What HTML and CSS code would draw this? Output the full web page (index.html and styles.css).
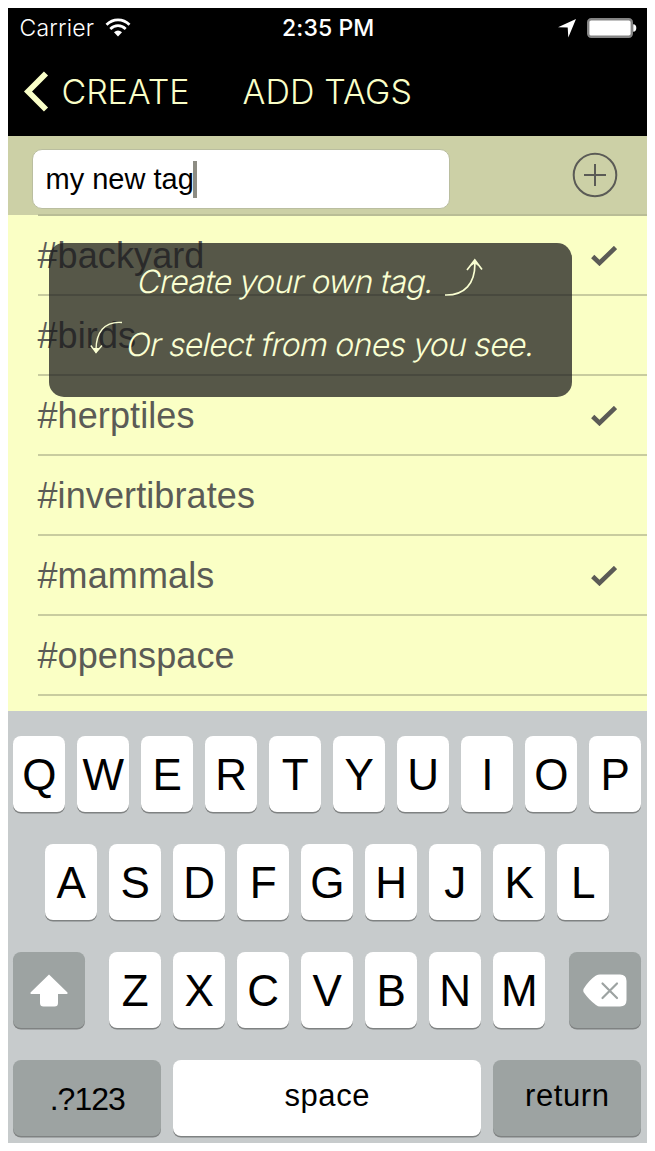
FILE: index.html
```html
<!DOCTYPE html>
<html lang="en">
<head>
<meta charset="utf-8">
<title>Add Tags</title>
<link rel="stylesheet" href="styles.css">
</head>
<body>
<main class="phone">
  <header class="top">
    <div class="status">
      <div class="carrier"><span class="carrier-name">Carrier</span>
        <svg class="wifi" width="26" height="20" viewBox="0 0 26 20" fill="none" stroke="#fff"><path d="M1.5 6.8C8 .2 18 .2 24.500 6.800" stroke-width="2.700"/><path d="M5.300 11C9.800 6.500 16.200 6.500 20.700 11" stroke-width="2.700"/><path d="M13 18.500L9 14.300Q13 10.800 17 14.300Z" fill="#fff" stroke="none"/></svg>
      </div>
      <div class="time">2:35 PM</div>
      <div class="indicators">
        <svg width="18" height="19" viewBox="0 0 18 19"><path d="M18 0L10.300 18.500L9.700 8.500L0 8.200Z" fill="#fff"/></svg>
        <svg width="50" height="20" viewBox="0 0 50 20"><rect x="1.200" y="1.200" width="43.600" height="17.600" rx="3" fill="#fff" stroke="#858585" stroke-width="2.400"/><path d="M46.200 6.200Q49.300 6.500 49.300 10Q49.300 13.500 46.200 13.800Z" fill="#fff"/></svg>
      </div>
    </div>
    <nav class="nav">
      <svg class="back" width="25" height="41" viewBox="0 0 25 41" fill="none" stroke="#faffc8" stroke-width="5.800"><path d="M22 2.500L4 20.500L22 38.500"/></svg>
      <span class="back-label">CREATE</span>
      <h1 class="title">ADD TAGS</h1>
    </nav>
  </header>
  <section class="entry">
    <div class="field"><span class="value">my new tag</span><i class="caret"></i></div>
    <svg class="add" width="46" height="46" viewBox="0 0 46 46" fill="none" stroke="#5b5b56" stroke-width="2"><circle cx="23" cy="23" r="21.300"/><path d="M12 23H34M23 12V34"/></svg>
  </section>
  <section class="list">
    <div class="edge"></div>
    <div class="row"><span>#backyard</span><svg class="check" width="26" height="20" viewBox="0 0 26 20"><path d="M1.700 10.500L8.500 17L24.500 1.500"/></svg></div>
    <div class="row"><span>#birds</span></div>
    <div class="row"><span>#herptiles</span><svg class="check" width="26" height="20" viewBox="0 0 26 20"><path d="M1.700 10.500L8.500 17L24.500 1.500"/></svg></div>
    <div class="row"><span>#invertibrates</span></div>
    <div class="row"><span>#mammals</span><svg class="check" width="26" height="20" viewBox="0 0 26 20"><path d="M1.700 10.500L8.500 17L24.500 1.500"/></svg></div>
    <div class="row"><span>#openspace</span></div>
    <aside class="hint">
      <p class="hint-create"><span>Create your own tag.</span>
        <svg width="40" height="40" viewBox="0 0 40 40" fill="none" stroke="#faffd2" stroke-width="1.700"><path d="M1 39C20 39.500 32 28 30.800 5M23 14L30.800 4L38 13.500"/><path d="M27 10L30.800 3.500L34.500 10L30.800 7.500Z" fill="#faffd2" stroke="none"/></svg></p>
      <p class="hint-select"><svg width="33" height="40" viewBox="0 0 33 40" fill="none" stroke="#faffd2" stroke-width="1.400"><path d="M32 6.500C14 5 6 17 6 34M.800 29.500L6 36.500L12 29.500"/><path d="M3 32L6 37.500L9.500 32Z" fill="#faffd2" stroke="none"/></svg>
        <span>Or select from ones you see.</span></p>
    </aside>
  </section>
  <section class="keyboard">
    <div class="keys"><b>Q</b><b>W</b><b>E</b><b>R</b><b>T</b><b>Y</b><b>U</b><b>I</b><b>O</b><b>P</b></div>
    <div class="keys"><b>A</b><b>S</b><b>D</b><b>F</b><b>G</b><b>H</b><b>J</b><b>K</b><b>L</b></div>
    <div class="keys">
      <b class="dark shift"><svg width="38" height="33" viewBox="0 0 38 33"><path d="M19 .500L37.500 18.500Q38 20 36.500 20H28V29Q28 32.500 24.500 32.500H13.500Q10 32.500 10 29V20H1.500Q0 20 .500 18.500Z" fill="#fff"/></svg></b>
      <b>Z</b><b>X</b><b>C</b><b>V</b><b>B</b><b>N</b><b>M</b>
      <b class="dark delete"><svg width="44" height="33" viewBox="0 0 44 33"><path d="M.500 15Q6 6 13 1.500Q15 .500 17 .500H37Q43.500 .500 43.500 7V26Q43.500 32.500 37 32.500H17Q15 32.500 13 31Q6 26 .500 18Q0 16.500 .500 15Z" fill="#fff"/><path d="M19.500 9.500L34 24M34 9.500L19.500 24" stroke="#9da3a2" stroke-width="2.200" stroke-linecap="round"/></svg></b>
    </div>
    <div class="keys wide"><b class="dark mode">.?123</b><b class="space">space</b><b class="dark return">return</b></div>
  </section>
</main>
</body>
</html>
```
FILE: styles.css
```css
* { box-sizing: border-box; }
body { margin: 0; padding: 8px 7.5px; background: #fff; font-family: "Liberation Sans", Arial, sans-serif; }
.phone { width: 639.5px; height: 1135px; display: flex; flex-direction: column; }
.top { height: 127.5px; background: #000; display: flex; flex-direction: column; }
.status { height: 40px; display: grid; grid-template-columns: 1fr auto 1fr; align-items: center; color: #fff; padding: 0 10px 0 12px; }
.carrier { display: flex; align-items: center; gap: 11px; }
.carrier-name { font: 300 23px/40px Inter, sans-serif; letter-spacing: .2px; }
.time { font: 500 23px/40px Inter, sans-serif; letter-spacing: .1px; }
.indicators { display: flex; justify-content: flex-end; align-items: center; gap: 11px; }
.nav { height: 87px; display: flex; align-items: center; padding: 0 0 0 16px; color: #faffc8; font: 350 34px/40px Inter, sans-serif; }
.back-label { margin-left: 13px; width: 127px; white-space: nowrap; letter-spacing: -.1px; }
.title { margin: 0 0 0 54px; font: inherit; letter-spacing: .1px; white-space: nowrap; }
.entry { height: 79.5px; background: #ccd0a6; display: flex; justify-content: space-between; align-items: center; padding: 0 29px 0 24px; }
.field { width: 418px; height: 60px; margin-top: 8px; border: 1px solid #babea0; border-radius: 10px; background: #fff; display: flex; align-items: center; padding-left: 13px; color: #000; font-size: 29px; }
.caret { width: 4px; height: 37px; background: #8d8c83; margin-left: -1px; }
.value { white-space: nowrap; letter-spacing: 0; }
.list { position: relative; height: 496px; background: #faffc5; padding-left: 30px; }
.edge { height: 2px; margin-top: -1px; background: #b9bd96; }
.row { height: 80px; display: flex; align-items: center; justify-content: space-between; padding: 2px 30px 0 0; border-bottom: 2px solid #c8cc9f; color: #5b5b56; font-size: 36px; letter-spacing: .1px; }
.check { fill: none; stroke: #5b5b56; stroke-width: 4.6; }
.hint { position: absolute; left: 41.5px; top: 28px; width: 523px; height: 154px; border-radius: 15px; background: rgba(24,24,26,.73); color: #faffd2; font: 300 32px/40px Inter, sans-serif; padding-top: 13px; }
.hint p { margin: 0; height: 63px; display: flex; white-space: nowrap; }
.hint span { padding-top: 6px; transform: skewX(-12deg); letter-spacing: -.76px; }
.hint-create { padding-left: 88px; gap: 10px; }
.hint .hint-create span { width: 297px; letter-spacing: -.76px; }
.hint-select { padding-left: 41px; gap: 3px; }
.hint-select svg { margin-top: -3px; }
.keyboard { height: 432px; background: #c7cbcc; padding: 24.5px 6px 0; display: flex; flex-direction: column; gap: 32px; }
.keys { height: 76px; display: flex; justify-content: center; gap: 12px; }
.keys b { width: 52px; height: 76px; flex: none; display: flex; align-items: center; justify-content: center; padding-top: 2px; border-radius: 8px; background: #fff; box-shadow: 0 1.5px 0 #7f8282; color: #000; font-weight: 400; font-size: 44px; }
.keys .dark { background: #9da3a2; }
.keys .shift { width: 72px; margin-right: 12px; }
.keys .delete { width: 72px; margin-left: 12px; }
.keys .mode { width: 148px; padding-top: 3px; font-size: 32px; letter-spacing: -1px; }
.keys .space { width: 308px; padding: 0 0 3px; font-size: 31px; letter-spacing: .6px; }
.keys .return { width: 148px; padding: 0 0 3px; font-size: 31px; letter-spacing: .6px; }
```
